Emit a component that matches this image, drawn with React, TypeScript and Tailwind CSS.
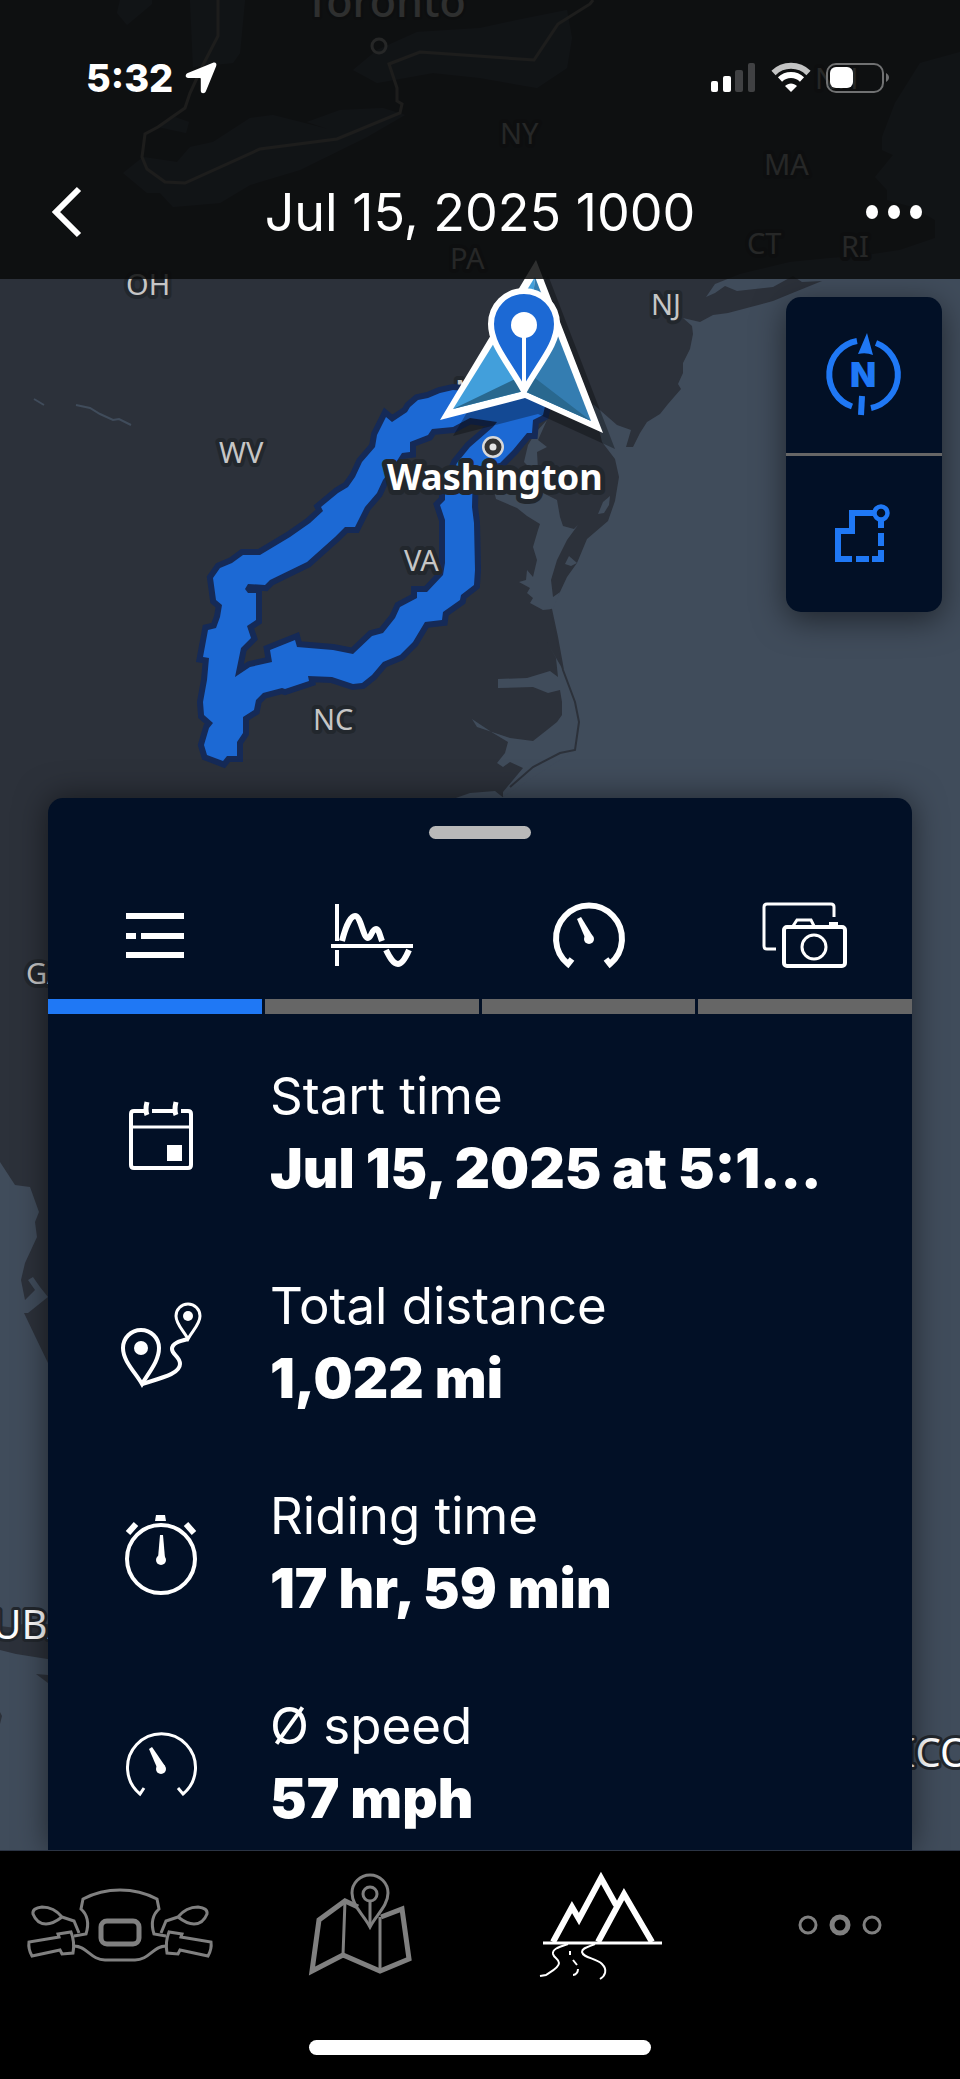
import React from 'react';

const mapLabels = [
  { text: 'NH', x: 815, y: 89 },
  { text: 'NY', x: 500, y: 144 },
  { text: 'MA', x: 764, y: 175 },
  { text: 'CT', x: 747, y: 254 },
  { text: 'RI', x: 841, y: 257 },
  { text: 'PA', x: 450, y: 269 },
  { text: 'OH', x: 126, y: 295 },
  { text: 'NJ', x: 651, y: 315 },
  { text: 'MD', x: 455, y: 401 },
  { text: 'WV', x: 219, y: 463 },
  { text: 'VA', x: 404, y: 571 },
  { text: 'NC', x: 313, y: 730 },
  { text: 'GA', x: 26, y: 984 },
];

const MapCanvas: React.FC = () => (
  <svg
    className="absolute inset-0 w-full h-full"
    viewBox="0 0 960 2079"
    preserveAspectRatio="xMidYMin slice"
    fontFamily="'Noto Sans', sans-serif"
    aria-hidden="true"
  >
    <rect width="960" height="2079" fill="#404c5b" />

    {/* Mainland */}
    <path
      fill="#2c313a"
      d="M0 0H960V52L920 63L895 103L882 137V150L893 155L875 177L887 190V200L913 207L935 220V238L900 250L860 256L830 258L790 262L740 274L715 284L706 297L715 293L725 286L737 291L773 287L793 276L802 282L822 281L790 294L773 301L728 313L713 315L700 322L683 318L692 326L693 334L690 349L683 363V373L678 384L681 389L668 404L660 414L647 422L640 433L633 447H626L631 430L617 425L593 404L602 442L615 459L619 477L615 501L608 521L587 539L577 563L567 577L560 592L551 609L557 637L563 670L575 702L579 722L575 750L560 753L533 767L510 787L503 797L458 800V1163H48V1297L28 1313H24L35 1336L48 1363V1297L40 1287L33 1277L28 1280L35 1290L25 1300L21 1280L25 1263L37 1237L35 1222L39 1212L30 1187L15 1185L0 1162Z"
    />

    {/* Great Lakes */}
    <g fill="#404c5b">
      <path d="M123 173L143 157L177 162L190 147L213 142L250 118L273 115L328 129L307 122L340 110L383 108L405 115L367 137L300 170L250 185L220 203L173 207L160 193H147Z" />
      <path d="M353 70L377 50L417 32L480 28L517 20L567 10L572 38L567 68L537 88L480 78L433 73L377 83Z" />
      <path d="M190 0L193 67L233 63L240 53L245 0ZM120 0L117 13L127 25L152 4V0ZM158 127L175 117L189 122L186 133Z" />
    </g>

    {/* Chesapeake Bay and the sounds */}
    <g fill="#404c5b">
      <path d="M547 420L536 432L528 445L524 462L530 468L533 490L517 495L493 487L496 499L517 508L527 516L540 524L538 530L533 547L537 560L533 577L527 570L526 580L519 582L530 588L527 593L533 598L530 603L543 610L553 609L560 592L563 590L553 597L551 580L557 560L567 540L578 525L574 529L563 526L560 517L557 500L545 494L538 470L537 452L547 447L538 440Z" />
      <path d="M610 496L603 502L598 514L604 513L609 505Z" />
      <path d="M577 563L569 556L565 564L571 566Z" />
      <path d="M547 642L556 658L558 677L550 671L527 678L498 679V688L533 687L548 693L560 690L562 702V715L557 722L547 730L533 741L510 738L477 727L472 719L493 733L508 742L505 753L497 763L503 767L510 762L523 768L503 792V797L575 750L579 722L575 702L563 670Z" />
      <path d="M453 799L470 793L495 791L505 799Z" />
    </g>
    <path fill="none" stroke="#2c313a" strokeWidth="2" d="M551 609L557 637L563 670L575 702L579 722L575 750L560 753L533 767L510 787" />
    <path fill="none" stroke="#404c5b" strokeWidth="2" d="M34 399L44 405M76 405L90 408L100 414L113 420L119 419L131 425" />

    {/* Caribbean */}
    <path fill="#2c313a" d="M0 1626L16 1628L22 1624H60V1661L16 1654L0 1650ZM36 1674L60 1676V1692ZM0 1712L2 1716L0 1724Z" />

    {/* State border through the lakes */}
    <path
      fill="none"
      stroke="#8b8681"
      strokeWidth="3"
      d="M218 0V36L203 65L190 93L185 108L158 127L145 134L142 157L147 169L165 182L185 183L260 149L337 139L400 113L402 104L397 101V88L389 64L420 52L534 60L558 24L590 4L593 0"
    />

    <g fill="#c6c6c6" stroke="#22272d" strokeWidth="8" strokeLinejoin="round" paintOrder="stroke" fontSize="29">
      {mapLabels.map((label) => (
        <text key={label.text} x={label.x} y={label.y}>
          {label.text}
        </text>
      ))}
    </g>
    <g fill="#ffffff" stroke="#22272d" strokeWidth="6" strokeLinejoin="round" paintOrder="stroke">
      <text x="305" y="17" fontSize="43" fontWeight="500">Toronto</text>
      <text x="-33" y="1639" fontSize="40">CUBA</text>
      <text x="902" y="1767" fontSize="40">ICO</text>
    </g>
    <circle cx="379" cy="46" r="7" fill="none" stroke="#c6c6c6" strokeWidth="3" />

    {/* Recorded ride */}
    <path
      fill="#1c69d4"
      fillRule="evenodd"
      stroke="#152a57"
      strokeWidth="12"
      paintOrder="stroke"
      d="M453 390L440 393L428 398L418 400L410 407L407 412L392 422L386 417L377 435L375 447L362 462L355 477L348 487L338 493L321 507L323 511L310 523L290 537L260 555H243L232 563L220 568L213 578L216 600L222 605L220 617L216 628L208 630L203 657L209 658L207 680L203 702L204 715L213 723L209 728L204 745L207 755L223 761L227 756H237V742L243 733V717L254 710L256 700L263 693L282 688L285 689L309 681L308 676L332 677L353 684L362 683L372 675L383 662L400 655L413 642L425 622L442 620L443 612L460 600L461 595L474 585L475 570L474 523L472 507L473 467L500 463L513 450L527 433H532L533 420L543 415L547 398Z
         M453 427L432 429L428 435L410 442V452L402 453L393 467L383 480L377 493L365 507L355 527H345L335 537L307 562L270 580L265 585L248 584L245 589L248 593H256V620L247 626L251 638L241 648L235 677L250 667L272 662L270 650L295 640L297 647L333 650L353 654L372 636L383 633L395 618L400 607L417 598V592H427L443 575L445 563V520L440 505L445 500V490L457 463L470 447L493 427L497 422L470 418Z"
    />

    <g fill="#c6c6c6" stroke="#22272d" strokeWidth="8" strokeLinejoin="round" paintOrder="stroke" fontSize="29">
      <text x="404" y="571">VA</text>
    </g>
    <circle cx="493" cy="447" r="11" fill="#d9d9d9" />
    <circle cx="493" cy="447" r="6" fill="#e6e6e6" stroke="#333333" strokeWidth="5" />
    <text x="387" y="490" fontSize="36" fontWeight="700" fill="#ffffff" stroke="#22272d" strokeWidth="10" strokeLinejoin="round" paintOrder="stroke">
      Washington
    </text>

    {/* Current position */}
    <path fill="#000000" fillOpacity="0.3" d="M548 275L615 449L538 414L453 436Z" />
    <path fill="#ffffff" d="M536 260L603 433L525 398L440 420Z" />
    <path fill="#429fdb" d="M535 277L453 409L524 391Z" />
    <path fill="#347db1" d="M535 277L591 421L524 391Z" />
    <path fill="#29688f" d="M453 409L513 380L535 378L591 421L524 391Z" />
    <path fill="#1c69d4" stroke="#ffffff" strokeWidth="6" d="M524 391C508 362 491 345 491 324A33 33 0 0 1 557 324C557 345 540 362 524 391Z" />
    <circle cx="524" cy="325" r="13" fill="#ffffff" />
    <path stroke="#ffffff" strokeWidth="4" d="M524 330V386" />
  </svg>
);

const StatusBar: React.FC = () => (
  <div className="h-[147px] pt-[9px] pl-[86px] pr-[70px] flex items-center justify-between">
    <div className="flex items-center gap-3">
      <span className="text-[38px] leading-[38px] font-extrabold">5:32</span>
      <svg width="32" height="32" viewBox="0 0 32 32" fill="#ffffff">
        <path d="M28 .8C30.600 0 32 1.500 31.200 4L21 29C20 32 16 32 15.800 29V17C15.800 16.300 15.500 16 14.800 16H3.200C0 16 0 12 2.800 11Z" />
      </svg>
    </div>
    <svg width="180" height="32" viewBox="0 0 180 32">
      <g fill="#ffffff">
        <rect x="1" y="19" width="7" height="11" rx="2" />
        <rect x="13" y="14" width="8" height="16" rx="2" />
      </g>
      <g fill="#404143">
        <rect x="25" y="8" width="8" height="22" rx="2" />
        <rect x="38" y="1" width="7" height="29" rx="2" />
      </g>
      <path d="M63.500 11A25 25 0 0 1 98.500 11" fill="none" stroke="#c3c4c4" strokeWidth="6" />
      <path d="M70 17.500A16 16 0 0 1 92 17.500" fill="none" stroke="#ffffff" strokeWidth="6" />
      <path d="M81 30L75 24C78.500 20.500 83.500 20.500 87 24Z" fill="#ffffff" />
      <rect x="117" y="2" width="56" height="28" rx="9" fill="none" stroke="#707172" strokeWidth="2" />
      <rect x="120" y="5" width="23" height="21" rx="6" fill="#ffffff" />
      <path d="M176 11C180 13 180 18 176 20Z" fill="#707172" />
    </svg>
  </div>
);

const Header: React.FC = () => (
  <header className="relative z-20 bg-[#090a0a]/85">
    <StatusBar />
    <div className="h-[132px] px-[36px] flex items-center justify-between">
      <button aria-label="Back" className="p-2">
        <svg width="44" height="56" viewBox="0 0 44 56" fill="none" stroke="#ffffff" strokeWidth="6">
          <path d="M35 4L12 27L35 50" />
        </svg>
      </button>
      <h1 className="text-[52px] leading-[64px] font-normal">Jul 15, 2025 1000</h1>
      <button aria-label="More options">
        <svg width="60" height="56" viewBox="0 0 60 56" fill="#ffffff">
          <ellipse cx="8" cy="27" rx="6" ry="7" />
          <ellipse cx="30" cy="27" rx="6" ry="7" />
          <ellipse cx="52" cy="27" rx="6" ry="7" />
        </svg>
      </button>
    </div>
  </header>
);

const MapTools: React.FC = () => (
  <div className="flex justify-end pt-[18px] pr-[18px]">
    <div className="w-[156px] bg-[#021026] rounded-[15px] shadow-[0_8px_32px_rgba(0,0,0,0.5)]">
      <button aria-label="North up" className="w-full h-[156px] flex items-center justify-center">
        <svg width="96" height="96" viewBox="0 0 96 96" fill="none" stroke="#1f78f5" strokeWidth="6">
          <path d="M41 14A34 34 0 0 0 36 79.500M60 16A34 34 0 0 1 55 81" />
          <path d="M51 6L57 28Q50 25 42 27Z" fill="#1f78f5" stroke="none" />
          <path d="M46 69L45 88" />
          <text x="47" y="60" textAnchor="middle" fontSize="34" fontWeight="900" fill="#1f78f5" stroke="none">N</text>
        </svg>
      </button>
      <div className="h-[3px] bg-[#666666]" />
      <button aria-label="Show route" className="w-full h-[156px] flex items-center justify-center">
        <svg width="96" height="96" viewBox="0 0 96 96" fill="none" stroke="#1f78f5" strokeWidth="6">
          <path d="M59 27H36V45H22V73H36M40 73H53M56 73H65V64M65 60V47M65 42V33" />
          <circle cx="65" cy="27" r="6.500" strokeWidth="4.500" />
        </svg>
      </button>
    </div>
  </div>
);

const tabs = [
  {
    label: 'Overview',
    active: true,
    icon: (
      <g fill="#ffffff" stroke="none">
        <path d="M19 25H77V31H19ZM19 45H29V51H19ZM34 45H77V51H34ZM19 64H77V70H19Z" />
      </g>
    ),
  },
  {
    label: 'Elevation',
    active: false,
    icon: (
      <>
        <path strokeWidth="4" d="M13 16V53M13 62V78M7 58H89" />
        <path strokeWidth="6" d="M18 53C21 41 26 28 31 28C37 28 39 50 44 50C47 50 48 41 52 41C55 41 56 48 58 53" />
        <path strokeWidth="6" d="M62 62C65 68 69 76 74 76C78 76 82 69 85 62" />
      </>
    ),
  },
  {
    label: 'Speed',
    active: false,
    icon: (
      <>
        <path strokeWidth="6" d="M32 71L28 76A33 33 0 1 1 70 76L66 71" />
        <path d="M37 31L41 29L52 47L46 52Z" fill="#ffffff" stroke="none" />
        <circle cx="49" cy="51" r="5" fill="#ffffff" stroke="none" />
      </>
    ),
  },
  {
    label: 'Photos',
    active: false,
    icon: (
      <>
        <path strokeWidth="3" d="M19 61H10Q7 61 7 58V19Q7 16 10 16H74Q77 16 77 19V29" />
        <rect x="27" y="39" width="61" height="39" rx="3" strokeWidth="4" />
        <path strokeWidth="3" d="M36 38L40 32H54L57 38" />
        <rect x="72" y="34" width="9" height="5" fill="#ffffff" stroke="none" />
        <circle cx="57" cy="59" r="12" strokeWidth="3" />
      </>
    ),
  },
];

const stats = [
  {
    label: 'Start time',
    value: 'Jul 15, 2025 at 5:1...',
    icon: (
      <>
        <path strokeWidth="4" d="M32 27H21Q18 27 18 30V81Q18 84 21 84H75Q78 84 78 81V30Q78 27 75 27H68M39 27H62" />
        <path strokeWidth="3" d="M18 43H78" />
        <path strokeWidth="5" d="M34 18Q32 26 34 31M63 18Q61 26 63 31" />
        <path d="M54 61H69V77H54Z" fill="#ffffff" stroke="none" />
      </>
    ),
  },
  {
    label: 'Total distance',
    value: '1,022 mi',
    icon: (
      <>
        <path strokeWidth="4" d="M29 90C22 78 10 67 10 54A18 18 0 0 1 46 54C46 67 36 78 29 90Z" />
        <path strokeWidth="3" d="M75 45C70 36 63 30 63 22A12 12 0 0 1 87 22C87 30 80 36 75 45Z" />
        <path strokeWidth="4" d="M75 45C67 47 59 49 59 55C59 61 67 62 67 70C67 80 48 84 29 90" />
        <circle cx="28" cy="54" r="7" fill="#ffffff" stroke="none" />
        <circle cx="75" cy="22" r="5" fill="#ffffff" stroke="none" />
      </>
    ),
  },
  {
    label: 'Riding time',
    value: '17 hr, 59 min',
    icon: (
      <>
        <circle cx="48" cy="55" r="34" strokeWidth="4" />
        <path d="M43 11H52L53 17H42Z" fill="#ffffff" stroke="none" />
        <path strokeWidth="6" d="M15 29L23 20M81 29L73 20" />
        <path d="M47 31H50L52 54H45Z" fill="#ffffff" stroke="none" />
        <circle cx="48" cy="56" r="5" fill="#ffffff" stroke="none" />
      </>
    ),
  },
  {
    label: 'Ø speed',
    value: '57 mph',
    icon: (
      <>
        <path strokeWidth="3" d="M31 74L27 80A34 34 0 1 1 70 80L65 74" />
        <path d="M36 35L39 33L52 52L45 56Z" fill="#ffffff" stroke="none" />
        <circle cx="48" cy="55" r="5" fill="#ffffff" stroke="none" />
      </>
    ),
  },
];

const TripSheet: React.FC = () => (
  <section className="relative z-10 mt-[186px] mx-12 flex-1 bg-[#021026] rounded-t-[15px] shadow-[0_0_32px_rgba(0,0,0,0.5)]">
    <div className="pt-7 flex justify-center">
      <div className="w-[102px] h-[13px] rounded-full bg-[#b9b9b9]" />
    </div>

    <div role="tablist" className="grid grid-cols-4 gap-[3px]">
      {tabs.map((tab) => (
        <button key={tab.label} role="tab" aria-label={tab.label} aria-selected={tab.active} className="flex flex-col items-center pt-[49px]">
          <svg width="96" height="96" viewBox="0 0 96 96" fill="none" stroke="#ffffff">
            {tab.icon}
          </svg>
          <div className={`w-full h-[15px] mt-[15px] ${tab.active ? 'bg-[#1f78f5]' : 'bg-[#666666]'}`} />
        </button>
      ))}
    </div>

    <dl className="pt-[46px] pb-4 flex flex-col gap-[66px]">
      {stats.map((stat) => (
        <div key={stat.label} className="pl-[65px] flex items-center gap-[61px]">
          <svg className="shrink-0" width="96" height="96" viewBox="0 0 96 96" fill="none" stroke="#ffffff">
            {stat.icon}
          </svg>
          <div className="whitespace-nowrap">
            <dt className="text-[51px] leading-[72px] font-normal">{stat.label}</dt>
            <dd className="text-[55px] leading-[72px] font-black">{stat.value}</dd>
          </div>
        </div>
      ))}
    </dl>
  </section>
);

const HandlebarHalf: React.FC = () => (
  <>
    <path d="M96 27Q76 27 59 36L57 46Q67 55 62 71L50 73" />
    <path d="M38 54Q30 44 18 44Q8 45 9 51Q13 61 22 61Q29 61 38 54L50 58L55 70" />
    <path d="M34 71L47 69Q51 79 49 90L38 91L36 87L8 93Q4 86 5 79L35 74Z" />
    <path d="M50 83C63 83 67 97 81 97H96" />
  </>
);

const navItems = [
  {
    label: 'Vehicle',
    icon: (
      <g stroke="#808080" strokeWidth="3">
        <HandlebarHalf />
        <g transform="translate(192 0) scale(-1 1)">
          <HandlebarHalf />
        </g>
        <rect x="77" y="58" width="38" height="23" rx="6" strokeWidth="5" />
      </g>
    ),
  },
  {
    label: 'Map',
    icon: (
      <g stroke="#808080">
        <path strokeWidth="5" d="M94 44L81 38L55 57L48 108L79 92L116 108L145 96L138 46L117 54" />
        <path strokeWidth="3" d="M81 38L79 92M116 54V108" />
        <path strokeWidth="3" d="M106 64C100 52 88 43 88 30A18 18 0 0 1 124 30C124 43 112 52 106 64Z" />
        <path strokeWidth="3" d="M106 38V62" />
        <circle cx="106" cy="31" r="7" strokeWidth="3" />
      </g>
    ),
  },
  {
    label: 'Trips',
    icon: (
      <g stroke="#ffffff">
        <path strokeWidth="6" d="M49 79L68 44L75 56L97 15L112 42M94 79L120 31L148 79" />
        <path strokeWidth="3" d="M39 80H158" />
        <path strokeWidth="2" d="M64 81C55 84 48 86 49 91C50 95 55 96 55 100C55 105 46 109 42 112L36 113" />
        <path strokeWidth="2" d="M91 81C84 84 78 85 78 89C79 95 92 95 98 101C104 107 101 113 96 116" />
        <path strokeWidth="2" d="M66 88V92M69 97L73 102M74 106C74 109 72 112 69 112" />
      </g>
    ),
  },
  {
    label: 'More',
    icon: (
      <g stroke="#808080">
        <circle cx="64" cy="62" r="8" strokeWidth="3" />
        <circle cx="96" cy="62" r="8" strokeWidth="5" />
        <circle cx="128" cy="62" r="8" strokeWidth="3" />
      </g>
    ),
  },
];

const BottomNav: React.FC = () => (
  <nav className="relative z-20 bg-black border-t border-[#2b3444] pt-3 pb-6">
    <div className="grid grid-cols-4">
      {navItems.map((item) => (
        <a key={item.label} href="#" aria-label={item.label} className="flex justify-center">
          <svg width="192" height="120" viewBox="0 0 192 120" fill="none">
            {item.icon}
          </svg>
        </a>
      ))}
    </div>
    <div className="w-[342px] h-[15px] mt-[57px] mx-auto rounded-full bg-white" />
  </nav>
);

export default function App() {
  return (
    <div
      className="relative min-h-screen flex flex-col overflow-hidden text-white"
      style={{ fontFamily: 'Inter, sans-serif' }}
    >
      <MapCanvas />
      <Header />
      <main className="relative flex-1 flex flex-col">
        <MapTools />
        <TripSheet />
      </main>
      <BottomNav />
    </div>
  );
}
